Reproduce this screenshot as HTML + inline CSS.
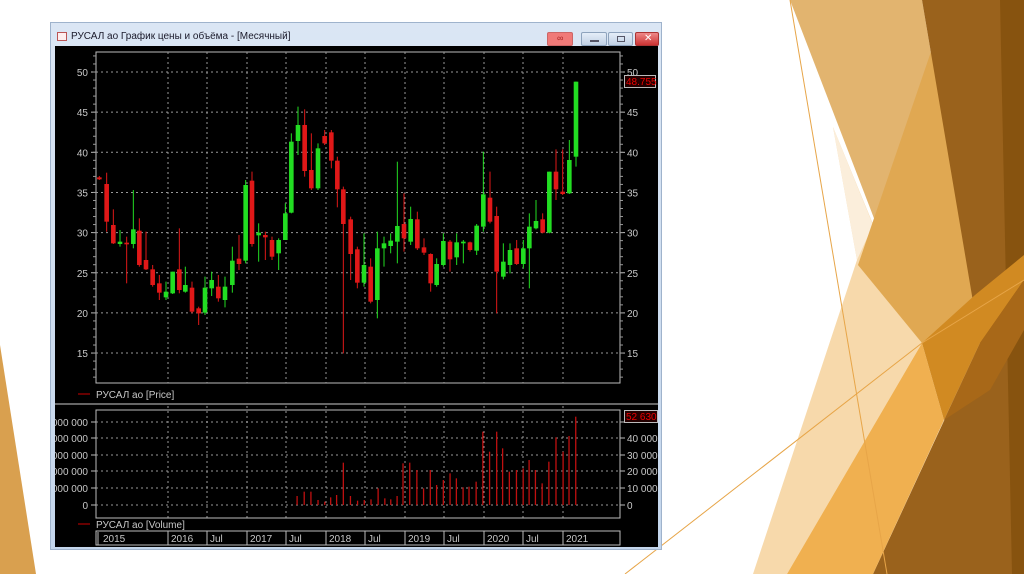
<!DOCTYPE html>
<html><head><meta charset="utf-8"><style>
html,body{margin:0;padding:0;width:1024px;height:574px;overflow:hidden;background:#fff;font-family:"Liberation Sans",sans-serif}
#bg{position:absolute;left:0;top:0}
#win{position:absolute;left:50px;top:22px;width:612px;height:528px;background:linear-gradient(#dbe6f4,#c4d6ec);border:1px solid #9fb3cc;box-sizing:border-box}
#title{position:absolute;left:20px;top:8px;font-size:10px;color:#1a1a2a}
.btn{position:absolute;top:9px;height:14px;border:1px solid #8ea3bd;border-radius:2px;background:linear-gradient(#e4edf8,#c0d0e4);box-sizing:border-box}
#ch{position:absolute;left:55px;top:46px}
</style></head><body>
<svg id="bg" width="1024" height="574">
<polygon points="0,345 36,574 0,574" fill="#d9a04f"/>
<polygon points="833,127 922,343 787,574 753,574 857,260" fill="#f7d9ab"/>
<polygon points="833,127 873,225 857,260" fill="#fbeedb"/>
<polygon points="790,0 922,0 980,343 922,343" fill="#e2b46f"/>
<polygon points="935,40 980,343 922,343 858,265" fill="#e0a852"/>
<polygon points="922,0 1024,0 1024,574 873,574 980,343" fill="#9a621c"/>
<polygon points="1000,0 1024,0 1024,574 1012,574" fill="#87530f"/>
<polygon points="787,574 873,574 944,420 922,343" fill="#f0b050"/>
<polygon points="922,343 975,295 1024,255 1024,280 980,343 944,420" fill="#d18a22"/>
<polygon points="944,420 980,343 1024,280 1024,330 990,390" fill="#a86818"/>
<line x1="790" y1="0" x2="887" y2="574" stroke="#e7a548" stroke-width="1"/>
<polyline points="625,574 922,343 1024,280" fill="none" stroke="#e7a548" stroke-width="1"/>
</svg>
<div id="win">
<div style="position:absolute;left:6px;top:9px;width:10px;height:9px;border:1px solid #b55;background:#fee;box-sizing:border-box"></div>
<div id="title">РУСАЛ ао График цены и объёма - [Месячный]</div>
<div class="btn" style="left:496px;width:26px;background:#f07a78;border-color:#c66"><span style="position:absolute;left:9px;top:0;font-size:9px;color:#a22">∞</span></div>
<div class="btn" style="left:530px;width:26px"><div style="position:absolute;left:8px;top:7px;width:9px;height:2px;background:#556"></div></div>
<div class="btn" style="left:557px;width:25px"><div style="position:absolute;left:8px;top:3px;width:8px;height:6px;border:1px solid #556;box-sizing:border-box"></div></div>
<div class="btn" style="left:584px;width:24px;background:linear-gradient(#e88,#c33);border-color:#a33"><span style="position:absolute;left:8px;top:0;font-size:10px;color:#fff">✕</span></div>
</div>
<svg id="ch" width="603" height="501" viewBox="55 46 603 501" style="background:#000">
<g id="g" font-family="Liberation Sans" font-size="10" fill="#c8c8c8"></g>
</svg>
<script>
var g=document.getElementById('g'),h='';
function L(x1,y1,x2,y2,c,d){h+='<line x1="'+x1+'" y1="'+y1+'" x2="'+x2+'" y2="'+y2+'" stroke="'+c+'"'+(d?' stroke-dasharray="2,3"':'')+'/>';}
function T(x,y,t,a,c){h+='<text x="'+x+'" y="'+y+'"'+(a?' text-anchor="'+a+'"':'')+(c?' fill="'+c+'"':'')+'>'+t+'</text>';}
var vx=[168,207,247,286,326,365,405,444,484,523,563];
h+='<rect x="96" y="52" width="524" height="331" fill="none" stroke="#bbb"/>';
for(var p=15;p<=50;p+=5){var y=72+(50-p)*8.03;L(96,y,620,y,'#999',1);L(91,y,96,y,'#bbb');L(620,y,625,y,'#bbb');T(88,y+4,p,'end');T(627,y+4,p);}
for(var p=12;p<=52;p++){var y=72+(50-p)*8.03;L(93,y,96,y,'#999');L(620,y,623,y,'#999');}
vx.forEach(function(x){L(x,52,x,383,'#999',1);L(x,406,x,518,'#999',1);});
L(78,394,90,394,'#c00');T(96,398,'РУСАЛ ао [Price]');
h+='<rect x="624.5" y="75.5" width="31" height="12" fill="#200" stroke="#bbb"/>';T(626,85,'48.755',null,'#e00');
L(55,404,658,404,'#ccc');
h+='<rect x="96" y="410" width="524" height="108" fill="none" stroke="#bbb"/>';
var vl=[['0',505],['10 000 000',488],['20 000 000',471],['30 000 000',455],['40 000 000',438],['50 000 000',422]];
vl.forEach(function(v,i){L(96,v[1],620,v[1],'#999',1);L(91,v[1],96,v[1],'#bbb');L(620,v[1],625,v[1],'#bbb');T(88,v[1]+4,v[0].replace(/^\d+ /,''),'end');if(i<5)T(627,v[1]+4,v[0]);});
h+='<rect x="624.5" y="410.5" width="33" height="12" fill="#200" stroke="#bbb"/>';T(626,420,'52 630 9',null,'#e00');
L(78,524,90,524,'#c00');T(96,528,'РУСАЛ ао [Volume]');
h+='<rect x="96" y="531" width="524" height="14" fill="#000" stroke="#bbb"/>';L(98,532,98,545,'#bbb');
var tl=['2015','2016','Jul','2017','Jul','2018','Jul','2019','Jul','2020','Jul','2021'];var tx=[100].concat(vx);
tl.forEach(function(t,i){if(i>0)L(tx[i],531,tx[i],545,'#bbb');T(tx[i]+3,542,t);});
var vb=[[625,348],[643,335],[660,335],[678,360],[695,365],[710,352],[725,345],[742,248],[760,348],[778,362],[795,360],[812,358],[830,325],[847,355],[862,358],[878,348],[893,250],[910,248],[928,270],[945,325],[962,270],[978,315],[995,300],[1012,280],[1028,295],[1045,322],[1060,320],[1078,305],[1095,155],[1112,215],[1130,155],[1145,205],[1162,275],[1180,270],[1197,265],[1212,240],[1228,270],[1245,310],[1262,245],[1280,172],[1298,215],[1313,168],[1330,110]];
vb.forEach(function(b){var x=50+b[0]/2.53,y=380+b[1]/3;h+='<rect x="'+(x-0.6)+'" y="'+y+'" width="1.3" height="'+(505-y)+'" fill="#c01010"/>';});
var A=[[148,232,238,228,240,'r'],[170,252,365,218,395,'r'],[190,375,430,328,432,'r'],[210,425,432,390,440,'g'],[230,428,433,410,550,'r'],[250,388,432,270,445,'g'],[268,392,495,355,500,'r'],[288,480,508,395,510,'r'],[308,508,555,495,560,'r'],[328,550,578,525,600,'r'],[348,575,592,545,600,'g'],[368,515,580,515,582,'g'],[388,508,570,385,580,'r'],[406,555,575,500,578,'g'],[426,563,635,545,640,'r'],[446,625,640,620,675,'r'],[465,563,638,530,645,'g'],[485,540,565,515,588,'g'],[505,560,595,525,605,'r'],[525,560,600,530,622,'g'],[547,482,555,440,578,'g'],[567,476,492,405,510,'r'],[587,255,482,240,490,'g'],[606,242,432,215,440,'r'],[626,398,406,370,485,'g'],[646,405,412,395,480,'r'],[666,420,470,410,480,'r'],[686,420,460,415,510,'g'],[706,340,420,310,420,'g'],[724,125,338,100,340,'g'],[744,75,123,20,165,'g'],[764,75,213,28,230,'r'],[784,210,265,100,270,'r'],[804,145,265,130,270,'g'],[824,108,130,90,135,'r'],[844,97,182,90,205,'r'],[862,182,268,170,322,'r']];
var B=[[40,358,462,350,850,'r'],[62,448,552,440,630,'r'],[82,538,638,530,655,'r'],[102,585,638,490,650,'g'],[122,590,695,565,700,'r'],[142,535,690,485,745,'g'],[162,520,535,500,590,'g'],[182,512,528,490,550,'g'],[202,468,515,275,580,'g'],[222,462,505,370,545,'r'],[242,447,515,410,525,'g'],[262,448,535,425,540,'r'],[282,532,548,505,555,'r'],[302,552,640,550,665,'r'],[320,582,645,565,650,'g'],[340,513,585,490,590,'g'],[360,515,568,510,605,'r'],[380,517,562,490,585,'g'],[400,515,520,510,580,'g'],[420,517,540,515,545,'r'],[440,467,542,462,555,'g'],[460,373,470,245,485,'g'],[480,383,455,305,460,'r'],[500,438,605,410,730,'r'],[520,575,620,520,628,'g'],[540,540,585,520,610,'g'],[560,535,582,510,585,'r'],[580,535,582,510,595,'g'],[598,470,535,430,655,'g'],[618,453,475,390,478,'g'],[638,448,488,430,490,'r'],[658,305,488,305,490,'g'],[678,305,358,238,390,'r'],[698,365,372,238,375,'r'],[718,270,370,210,372,'g'],[738,35,260,35,290,'g']];
function C(c,ox,oy){var x=ox+c[0]/3,col=c[5]=='r'?'#e01818':'#22dd22';L(x,oy+c[3]/3,x,oy+c[4]/3,col);var t=oy+c[1]/3,b=oy+c[2]/3;h+='<rect x="'+(x-2.3)+'" y="'+t+'" width="4.6" height="'+Math.max(1.5,b-t)+'" fill="'+col+'"/>';}
A.forEach(function(c){C(c,50,100)});B.forEach(function(c){C(c,330,70)});
g.innerHTML=h;
</script>
</body></html>
